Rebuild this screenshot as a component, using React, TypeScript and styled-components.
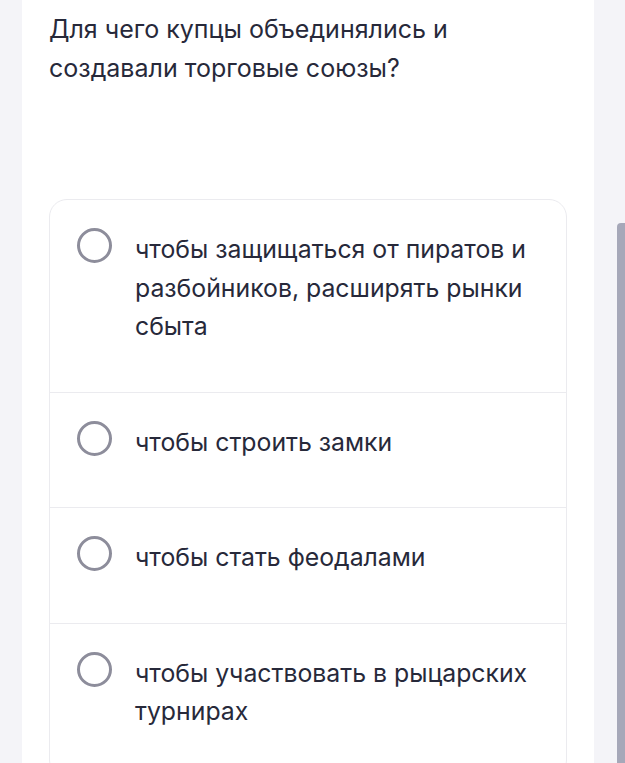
import React from 'react';
import styled, { createGlobalStyle } from 'styled-components';

const GlobalStyle = createGlobalStyle`
    html, body {
        margin: 0;
        padding: 0;
        background: #f4f4f8;
        font-family: Inter, "Noto Sans", sans-serif;
        overflow: hidden;
    }
`;

const Screen = styled.div`
    display: flex;
    height: 763px;
    overflow: hidden;
`;

const Panel = styled.div`
    width: 572px;
    margin-left: 22px;
    background: #ffffff;
    padding: 10px 27px 0 27px;
    box-sizing: border-box;
`;

const Gutter = styled.div`
    flex: 1;
    display: flex;
    justify-content: flex-end;
    padding-top: 223px;
`;

const ScrollThumb = styled.div`
    width: 8px;
    height: 560px;
    background: #a6a8b9;
    border-radius: 4px 0 0 0;
`;

const Question = styled.h1`
    margin: 0;
    font-size: 25px;
    font-weight: 400;
    line-height: 39px;
    color: #27293a;
`;

const Card = styled.div`
    margin-top: 111px;
    border: 1px solid #ebebef;
    border-radius: 18px;
    overflow: hidden;
`;

const Option = styled.label`
    display: flex;
    align-items: flex-start;
    gap: 23px;
    padding: 30px 30px 46px 27px;
    border-top: ${p => (p.$first ? 'none' : '1px solid #ebebef')};
    cursor: pointer;
`;

const Radio = styled.span`
    flex: none;
    width: 35px;
    height: 35px;
    margin-top: -2px;
    border: 3.5px solid #8d8d9b;
    border-radius: 50%;
    box-sizing: border-box;
`;

const OptionText = styled.span`
    font-size: 24.8px;
    line-height: 38.5px;
    color: #27293a;
`;

const answers = [
    'чтобы защищаться от пиратов и разбойников, расширять рынки сбыта',
    'чтобы строить замки',
    'чтобы стать феодалами',
    'чтобы участвовать в рыцарских турнирах',
];

export default function App() {
    return (
        <Screen>
            <GlobalStyle />
            <Panel>
                <Question>Для чего купцы объединялись и создавали торговые союзы?</Question>
                <Card>
                    {answers.map((a, i) => (
                        <Option key={i} $first={i === 0}>
                            <Radio />
                            <OptionText>{a}</OptionText>
                        </Option>
                    ))}
                </Card>
            </Panel>
            <Gutter>
                <ScrollThumb />
            </Gutter>
        </Screen>
    );
}
